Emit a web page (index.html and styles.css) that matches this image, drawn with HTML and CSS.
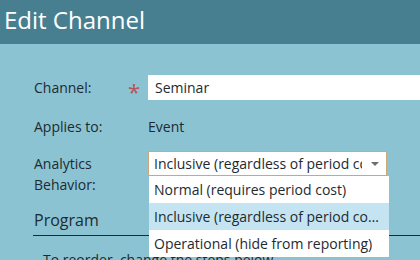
FILE: index.html
```html
<!DOCTYPE html>
<html lang="en">
<head>
  <meta charset="UTF-8">
  <title>Edit Channel</title>
  <link rel="stylesheet" href="styles.css">
</head>
<body>

  <header class="dialog-header">
    <h1>Edit Channel</h1>
  </header>

  <main class="dialog-body">
    <div class="form-row">
      <label class="form-label">Channel:</label>
      <span class="required">*</span>
      <div class="form-field">
        <input class="text-input" type="text" value="Seminar">
      </div>
    </div>

    <div class="form-row">
      <span class="form-label">Applies to:</span>
      <span class="required"></span>
      <div class="form-field static">Event</div>
    </div>

    <div class="form-row tall">
      <label class="form-label">Analytics<br>Behavior:</label>
      <span class="required"></span>
      <div class="form-field">
        <div class="combo">
          <span class="combo-value">Inclusive (regardless of period cost)</span>
          <span class="combo-arrow"></span>
          <ul class="combo-menu">
            <li>Normal (requires period cost)</li>
            <li class="selected">Inclusive (regardless of period cost)</li>
            <li>Operational (hide from reporting)</li>
          </ul>
        </div>
      </div>
    </div>

    <section class="program">
      <h2>Program</h2>
      <p>To reorder, change the steps below.</p>
    </section>
  </main>

</body>
</html>
```

FILE: styles.css
```css
/* --- Base --- */
:root {
  --header-bg: #477f91;
  --body-bg: #8bc3d3;
  --text: #1e2a30;
  --accent-red: #b4545a;
  --combo-border: #c9a87a;
  --menu-hover: #c4e4f1;
}

html, body {
  margin: 0;
  padding: 0;
  height: 100%;
  overflow: hidden;
}

body {
  background-color: var(--body-bg);
  color: var(--text);
  font-family: "Open Sans", "Noto Sans", sans-serif;
  font-size: 14px;
}

/* --- Header --- */
.dialog-header {
  height: 44px;
  background-color: var(--header-bg);
  display: flex;
  align-items: center;
  padding-left: 4px;
}

.dialog-header h1 {
  margin: 0 0 6px 0;
  color: #ffffff;
  font-size: 24px;
  font-weight: 400;
}

/* --- Form --- */
.dialog-body {
  padding: 28px 0 0 34px;
}

.form-row {
  display: grid;
  grid-template-columns: 94px 20px 1fr;
  align-items: center;
  min-height: 25px;
  margin-bottom: 12px;
}

.form-row.tall {
  align-items: start;
  margin-bottom: 0;
}

.form-label {
  line-height: 21px;
}

.form-row.tall .form-label {
  margin-top: 2px;
}

.required {
  color: var(--accent-red);
  font-size: 22px;
  line-height: 1;
  padding-top: 8px;
  text-align: left;
}

.text-input {
  display: block;
  width: 100%;
  box-sizing: border-box;
  height: 25px;
  border: none;
  outline: none;
  padding: 0 7px;
  font-family: inherit;
  font-size: 14px;
  color: var(--text);
  background: #ffffff;
}

.form-field.static {
  line-height: 25px;
}

/* --- Combo box --- */
.combo {
  position: relative;
  width: 239px;
  height: 25px;
  box-sizing: border-box;
  border: 1px solid var(--combo-border);
  background: #ffffff;
  display: flex;
  align-items: center;
}

.combo-value {
  flex: 1;
  padding-left: 5px;
  white-space: nowrap;
  overflow: hidden;
  width: 0;
  margin-right: 24px;
}

.combo-arrow {
  position: absolute;
  right: 7px;
  top: 10px;
  width: 0;
  height: 0;
  border-left: 4px solid transparent;
  border-right: 4px solid transparent;
  border-top: 4px solid #6d6d6d;
}

.combo-menu {
  position: absolute;
  top: 24px;
  left: 0;
  width: 240px;
  margin: 0;
  padding: 0;
  list-style: none;
  background: #ffffff;
  z-index: 10;
}

.combo-menu li {
  height: 27px;
  line-height: 27px;
  padding-left: 5px;
  padding-right: 6px;
  white-space: nowrap;
  overflow: hidden;
  text-overflow: ellipsis;
}

.combo-menu li.selected {
  background-color: var(--menu-hover);
}

/* --- Program section --- */
.program {
  margin-top: 12px;
}

.program h2 {
  margin: 0;
  padding: 0 0 2px 1px;
  font-size: 16px;
  font-weight: 400;
  line-height: 26px;
  border-bottom: 1px solid #1c2a30;
  margin-left: -1px;
}

.program p {
  margin: 14px 0 0 9px;
}
```
